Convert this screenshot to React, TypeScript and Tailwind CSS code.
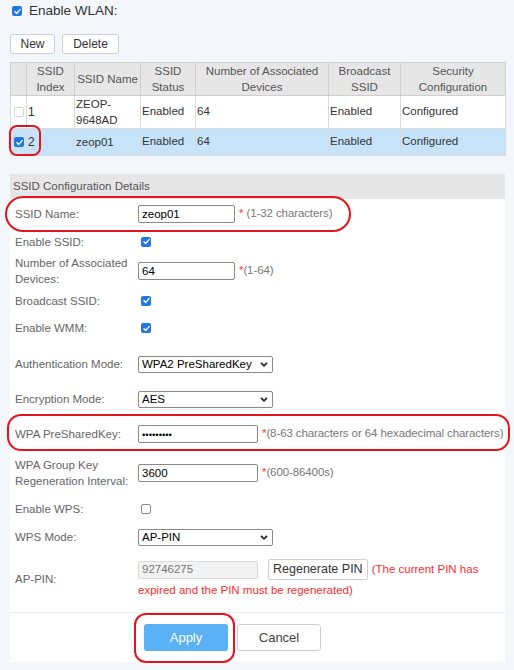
import type { ReactNode } from 'react'

const columns = [
  { title: '', width: 'w-[16px]' },
  { title: 'SSID Index', width: 'w-[48px]' },
  { title: 'SSID Name', width: 'w-[66px]' },
  { title: 'SSID Status', width: 'w-[55px]' },
  { title: 'Number of Associated Devices', width: 'w-[133px]' },
  { title: 'Broadcast SSID', width: 'w-[72px]' },
  { title: 'Security Configuration', width: 'w-[105px]' },
]

const ssids = [
  { index: '1', name: 'ZEOP-9648AD', status: 'Enabled', devices: '64', broadcast: 'Enabled', security: 'Configured', selected: false },
  { index: '2', name: 'zeop01', status: 'Enabled', devices: '64', broadcast: 'Enabled', security: 'Configured', selected: true },
]

function Check({ on, faint }: { on?: boolean; faint?: boolean }) {
  if (on) {
    return (
      <span className="inline-flex h-[10px] w-[10px] shrink-0 items-center justify-center rounded-[2px] bg-[#1f78e6]">
        <svg viewBox="0 0 10 10" className="h-[9px] w-[9px]">
          <path d="M2.2 5.2 4.2 7.1 7.9 2.9" fill="none" stroke="#fff" strokeWidth="1.6" strokeLinecap="round" strokeLinejoin="round" />
        </svg>
      </span>
    )
  }
  return (
    <span
      className={`inline-block h-[10px] w-[10px] shrink-0 rounded-[2px] border bg-white ${
        faint ? 'border-[#d6d6d6] bg-[#f7f7f7]' : 'border-[#8a8a8a]'
      }`}
    />
  )
}

function Select({ value }: { value: string }) {
  return (
    <div className="relative h-[17px] w-[135px]">
      <select
        defaultValue={value}
        className="h-full w-full appearance-none rounded-[2px] border border-[#8a8a8a] bg-white pl-[3px] text-[11.5px] leading-none text-black"
      >
        <option>{value}</option>
      </select>
      <svg className="pointer-events-none absolute right-[5px] top-[6px] h-[5px] w-[8px]" viewBox="0 0 8 5">
        <path d="M1 0.8 4 3.8 7 0.8" fill="none" stroke="#222" strokeWidth="1.7" />
      </svg>
    </div>
  )
}

function TextBox({ value, width, type = 'text' }: { value: string; width: string; type?: string }) {
  const size = type === 'password' ? 'text-[9.5px]' : 'text-[11.5px]'
  return (
    <input
      type={type}
      defaultValue={value}
      className={`h-[18px] ${width} ${size} shrink-0 rounded-[2px] border border-[#8a8a8a] bg-white px-[3px] text-black`}
    />
  )
}

function Hint({ children, spaced }: { children: ReactNode; spaced?: boolean }) {
  return (
    <span className="ml-[4px] whitespace-nowrap text-[11.5px] tracking-[-0.1px] text-[#777]">
      <span className="text-[#ff3b3b]">*</span>
      {spaced ? ' ' : ''}
      {children}
    </span>
  )
}

function Row({ label, height, children }: { label: ReactNode; height: string; children?: ReactNode }) {
  return (
    <div className={`flex ${height} items-center`}>
      <div className="w-[128px] shrink-0 pl-[5px] pr-[4px] leading-[16px] text-[#666]">{label}</div>
      <div className="flex items-center">{children}</div>
    </div>
  )
}

export default function App() {
  return (
    <div className="relative h-[670px] w-[514px] overflow-hidden bg-[#f3f7fb] font-['Liberation_Sans',Arial,sans-serif] text-[11.5px]">
      {/* WLAN switch */}
      <div className="flex h-[22px] items-center gap-[7px] pl-[12px]">
        <Check on />
        <span className="text-[13.5px] text-[#333]">Enable WLAN:</span>
      </div>

      {/* Toolbar */}
      <div className="mt-[12px] flex gap-[7px] pl-[10px]">
        <button className="h-[20px] w-[45px] rounded-[3px] border border-[#d0d0d0] bg-white text-[12px] text-[#333]">New</button>
        <button className="h-[20px] w-[57px] rounded-[3px] border border-[#d0d0d0] bg-white text-[12px] text-[#333]">Delete</button>
      </div>

      {/* SSID list */}
      <table className="ml-[10px] mt-[8px] w-[495px] table-fixed border-collapse border border-[#cfcfcf]">
        <thead>
          <tr className="h-[32px] bg-[#e6e6e6]">
            {columns.map((c) => (
              <th key={c.title} className={`${c.width} border border-[#cfcfcf] px-[2px] text-center font-normal leading-[16px] text-[#555]`}>
                {c.title}
              </th>
            ))}
          </tr>
        </thead>
        <tbody className="text-[#333]">
          {ssids.map((s) => (
            <tr key={s.index} className={s.selected ? 'h-[27px] bg-[#c6e3fa]' : 'h-[31px] bg-white'}>
              <td className="border border-[#dadada] pl-[3px]">
                <div className="flex items-center">
                  <Check on={s.selected} faint={!s.selected} />
                </div>
              </td>
              <td className="border border-[#dadada] pl-[1px] text-[12px]">{s.index}</td>
              <td className="border border-[#dadada] pl-[1px] pr-[6px] leading-[16px]">{s.name}</td>
              <td className="border border-[#dadada] pl-[1px]">{s.status}</td>
              <td className="border border-[#dadada] pl-[1px]">{s.devices}</td>
              <td className="border border-[#dadada] pl-[1px]">{s.broadcast}</td>
              <td className="border border-[#dadada] pl-[1px]">{s.security}</td>
            </tr>
          ))}
        </tbody>
      </table>

      {/* SSID details form */}
      <div className="ml-[10px] mt-[18px] w-[495px] bg-white">
        <div className="flex h-[25px] items-center bg-[#e6e6e6] pl-[3px] text-[#555]">SSID Configuration Details</div>

        <Row label="SSID Name:" height="h-[29px]">
          <TextBox value="zeop01" width="w-[97px]" />
          <Hint spaced>(1-32 characters)</Hint>
        </Row>
        <Row label="Enable SSID:" height="h-[27px]">
          <span className="ml-[3px] flex"><Check on /></span>
        </Row>
        <Row label="Number of Associated Devices:" height="h-[31px]">
          <TextBox value="64" width="w-[97px]" />
          <Hint>(1-64)</Hint>
        </Row>
        <Row label="Broadcast SSID:" height="h-[29px]">
          <span className="ml-[3px] flex"><Check on /></span>
        </Row>
        <Row label="Enable WMM:" height="h-[26px]">
          <span className="ml-[3px] flex"><Check on /></span>
        </Row>
        <Row label="Authentication Mode:" height="h-[46px]">
          <Select value="WPA2 PreSharedKey" />
        </Row>
        <Row label="Encryption Mode:" height="h-[24px]">
          <Select value="AES" />
        </Row>
        <Row label="WPA PreSharedKey:" height="h-[46px]">
          <TextBox value="zeop01234" type="password" width="w-[120px]" />
          <Hint>(8-63 characters or 64 hexadecimal characters)</Hint>
        </Row>
        <Row label="WPA Group Key Regeneration Interval:" height="h-[32px]">
          <TextBox value="3600" width="w-[120px]" />
          <Hint>(600-86400s)</Hint>
        </Row>
        <Row label="Enable WPS:" height="h-[40px]">
          <span className="ml-[3px] flex"><Check /></span>
        </Row>
        <Row label="WPS Mode:" height="h-[16px]">
          <Select value="AP-PIN" />
        </Row>

        {/* AP-PIN with regenerate action */}
        <div className="flex items-center pt-[14px]">
          <div className="w-[128px] shrink-0 pl-[5px] text-[#666]">AP-PIN:</div>
          <div className="w-[360px] leading-[21px]">
            <div className="flex items-center">
              <input
                disabled
                defaultValue="92746275"
                className="h-[18px] w-[120px] rounded-[2px] border border-[#dcdcdc] bg-[#f2f2f2] px-[3px] text-[11.5px] text-[#777]"
              />
              <button className="ml-[10px] h-[21px] rounded-[2px] border border-[#d0d0d0] bg-white px-[4px] text-[12.5px] leading-[19px] text-[#333]">
                Regenerate PIN
              </button>
              <span className="ml-[4px] text-[#ff2d2d]">(The current PIN has</span>
            </div>
            <div className="text-[#ff2d2d]">expired and the PIN must be regenerated)</div>
          </div>
        </div>

        <div className="mt-[11px] flex gap-[9px] border-t border-[#ececec] pb-[11px] pl-[134px] pt-[11px]">
          <button className="h-[27px] w-[84px] rounded-[3px] bg-[#5ab1f6] text-[13px] text-white">Apply</button>
          <button className="h-[27px] w-[84px] rounded-[3px] border border-[#cfcfcf] bg-white text-[13px] text-[#444]">Cancel</button>
        </div>
      </div>

      {/* red callouts */}
      <div className="pointer-events-none absolute left-[9px] top-[125px] h-[31px] w-[32px] rounded-[8px] border-[2.5px] border-[#e3141c]" />
      <div className="pointer-events-none absolute left-[5px] top-[196px] h-[36px] w-[346px] rounded-full border-[2.5px] border-[#e3141c]" />
      <div className="pointer-events-none absolute left-[7px] top-[414px] h-[37px] w-[503px] rounded-[14px] border-[2.5px] border-[#e3141c]" />
      <div className="pointer-events-none absolute left-[134px] top-[613px] h-[50px] w-[101px] rounded-[12px] border-[2.5px] border-[#e3141c]" />
    </div>
  )
}
